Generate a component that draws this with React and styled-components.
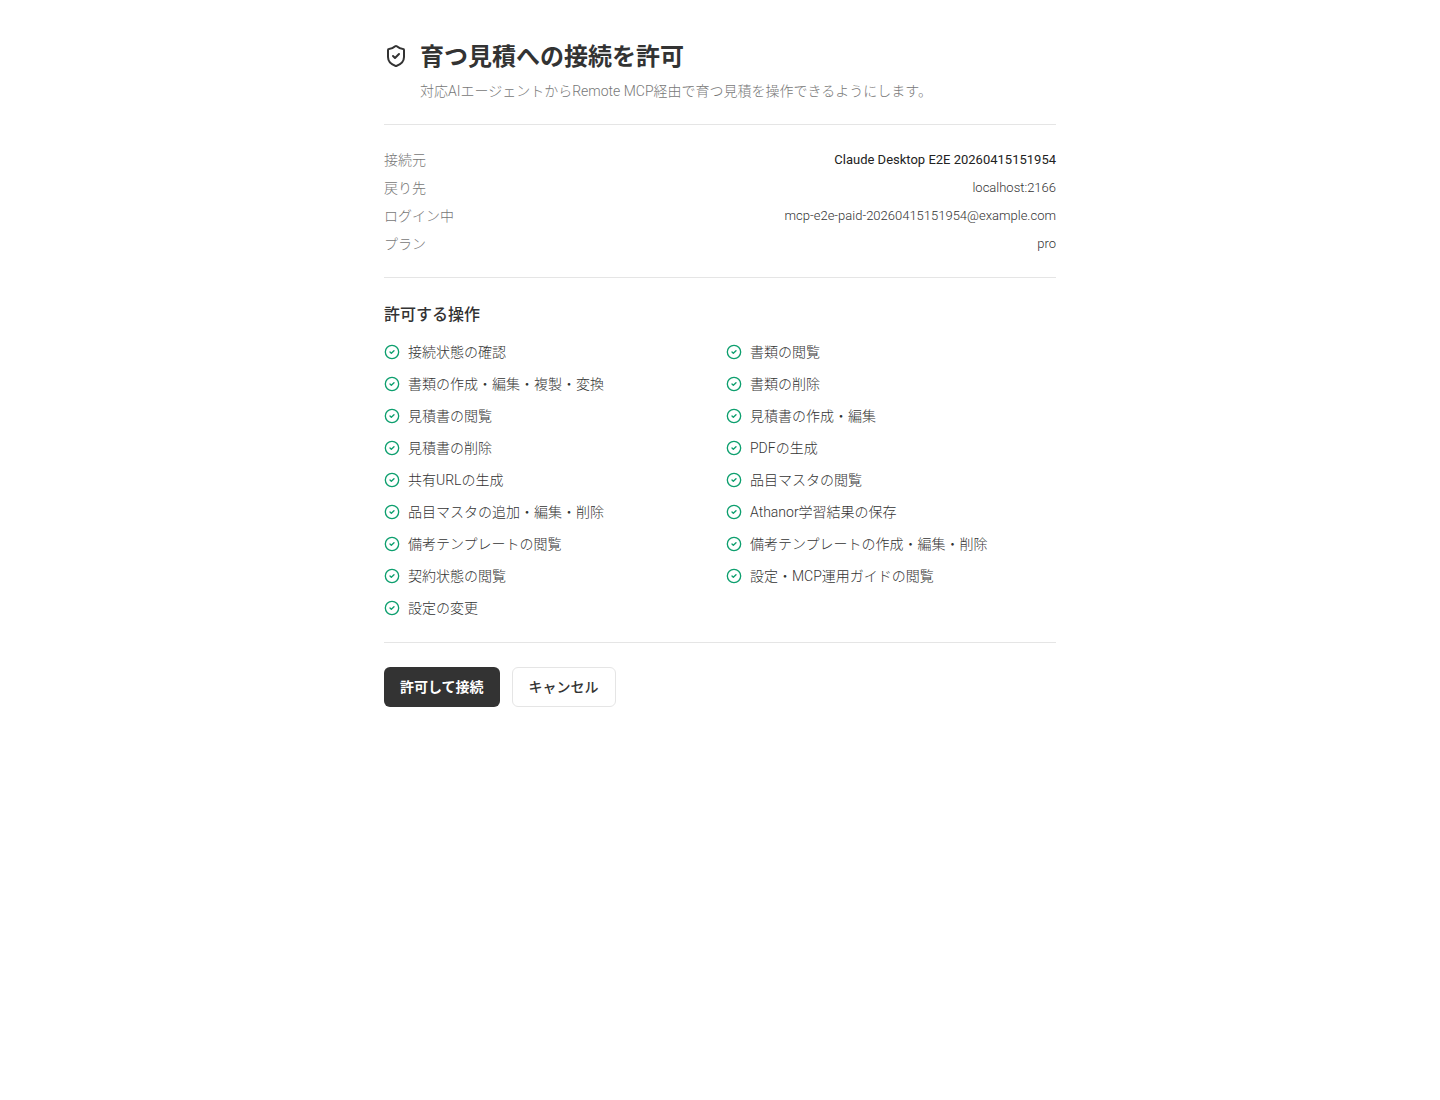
import React from 'react'
import styled, { createGlobalStyle } from 'styled-components'
import { CircleCheck, ShieldCheck } from 'lucide-react'

const details = [
    { label: '接続元', value: 'Claude Desktop E2E 20260415151954', strong: true },
    { label: '戻り先', value: 'localhost:2166' },
    { label: 'ログイン中', value: 'mcp-e2e-paid-20260415151954@example.com' },
    { label: 'プラン', value: 'pro' },
]

const scopes = [
    '接続状態の確認',
    '書類の閲覧',
    '書類の作成・編集・複製・変換',
    '書類の削除',
    '見積書の閲覧',
    '見積書の作成・編集',
    '見積書の削除',
    'PDFの生成',
    '共有URLの生成',
    '品目マスタの閲覧',
    '品目マスタの追加・編集・削除',
    'Athanor学習結果の保存',
    '備考テンプレートの閲覧',
    '備考テンプレートの作成・編集・削除',
    '契約状態の閲覧',
    '設定・MCP運用ガイドの閲覧',
    '設定の変更',
]

function App (){
    return(
        <>
            <GlobalStyle />
            <Page>
                <Header>
                    <ShieldIcon size={24} aria-hidden="true" />
                    <div>
                        <Title>育つ見積への接続を許可</Title>
                        <Description>対応AIエージェントからRemote MCP経由で育つ見積を操作できるようにします。</Description>
                    </div>
                </Header>
                <Details>
                    {details.map(({ label, value, strong }) => (
                        <DetailRow key={label}>
                            <DetailLabel>{label}</DetailLabel>
                            <DetailValue $strong={strong}>{value}</DetailValue>
                        </DetailRow>
                    ))}
                </Details>
                <Scopes>
                    <ScopesTitle>許可する操作</ScopesTitle>
                    <ScopeList>
                        {scopes.map((scope) => (
                            <ScopeItem key={scope}>
                                <CheckIcon size={16} aria-hidden="true" />
                                <span>{scope}</span>
                            </ScopeItem>
                        ))}
                    </ScopeList>
                </Scopes>
                <Actions>
                    <Button type="button" $primary>許可して接続</Button>
                    <Button type="button">キャンセル</Button>
                </Actions>
            </Page>
        </>
    )
}

export default App;

const GlobalStyle = createGlobalStyle`
*, *::before, *::after {
box-sizing: border-box;
}

body {
margin: 0;
background: #ffffff;
color: #333333;
font-family: Roboto, "Noto Sans CJK JP", sans-serif;
font-size: 14px;
font-weight: 300;
line-height: 20px;
}
`

const Page = styled.main`
max-width: 720px;
margin: 0 auto;
padding: 40px 24px;
`

const Header = styled.header`
display: flex;
align-items: flex-start;
gap: 12px;
padding-bottom: 23px;
border-bottom: 1px solid #e5e5e5;
`

const ShieldIcon = styled(ShieldCheck)`
flex-shrink: 0;
margin-top: 4px;
`

const Title = styled.h1`
margin: 0;
font-size: 24px;
font-weight: 700;
line-height: 34px;
`

const Description = styled.p`
margin: 7px 0 0;
color: #777777;
`

const Details = styled.dl`
display: grid;
gap: 8px;
margin: 0;
padding: 25px 0 23px;
border-bottom: 1px solid #e5e5e5;
`

const DetailRow = styled.div`
display: flex;
justify-content: space-between;
gap: 16px;
`

const DetailLabel = styled.dt`
color: #777777;
`

const DetailValue = styled.dd`
margin: 0;
text-align: right;
font-size: 13px;
font-weight: ${props => props.$strong ? 400 : 300};
color: ${props => props.$strong ? '#222222' : '#333333'};
`

const Scopes = styled.section`
padding: 24px 0;
border-bottom: 1px solid #e5e5e5;
`

const ScopesTitle = styled.h2`
margin: 0 0 14px;
font-size: 16px;
font-weight: 500;
line-height: 26px;
`

const ScopeList = styled.ul`
display: grid;
grid-template-columns: repeat(2, minmax(0, 1fr));
gap: 12px;
margin: 0;
padding: 0;
list-style: none;
`

const ScopeItem = styled.li`
display: flex;
align-items: flex-start;
gap: 8px;
`

const CheckIcon = styled(CircleCheck)`
flex-shrink: 0;
margin-top: 2px;
color: #0d9f6e;
`

const Actions = styled.div`
display: flex;
gap: 12px;
padding-top: 24px;
`

const Button = styled.button`
height: 40px;
padding: 0 16px;
border: ${props => props.$primary ? 'none' : '1px solid #e5e5e5'};
border-radius: 6px;
background: ${props => props.$primary ? '#333333' : '#ffffff'};
color: ${props => props.$primary ? '#ffffff' : '#333333'};
font-family: inherit;
font-size: 14px;
font-weight: ${props => props.$primary ? 700 : 500};
line-height: 20px;
cursor: pointer;
`
